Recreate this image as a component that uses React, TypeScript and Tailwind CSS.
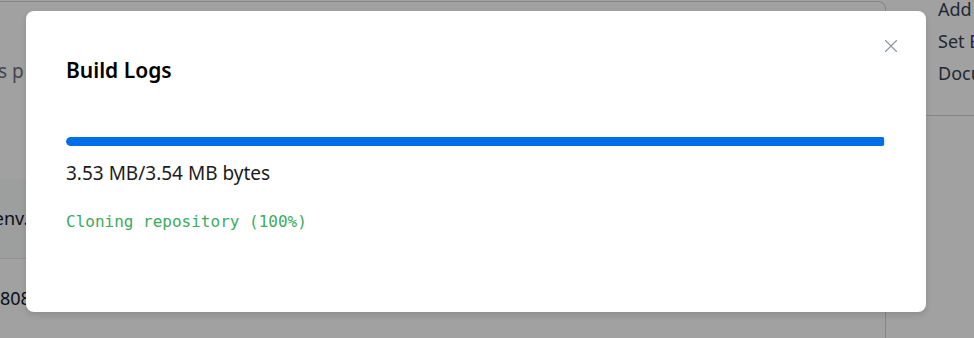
import { X } from "lucide-react";

const sans = "font-['Noto_Sans','Open_Sans',sans-serif]";

function BackgroundPage() {
    return (
        <div className={`absolute inset-0 bg-white ${sans}`}>
            <div className="flex h-full">
                <div className="flex-1 pt-[1px]">
                    <div className="h-full border-t border-r border-gray-300 rounded-tr-lg flex flex-col">
                        <div className="h-[56px]" />
                        <p className="text-[19px] leading-[26px] text-gray-500 whitespace-nowrap -ml-[2px]">
                            s p
                        </p>
                        <div className="h-[96px]" />
                        <div className="bg-gray-50 h-[80px] flex items-center text-[18px] text-gray-900 -ml-[11px] border-b border-gray-200 whitespace-nowrap">
                            .env.c
                        </div>
                        <div className="h-[80px] flex items-center text-[18px] text-gray-900 whitespace-nowrap">
                            808
                        </div>
                    </div>
                </div>
                <div className="w-[86px] ml-[2px]">
                    <ul className="pl-[50px] text-[18px] leading-[24px] text-gray-700 space-y-[8px] -mt-[3px]">
                        <li className="whitespace-nowrap">Add</li>
                        <li className="whitespace-nowrap">Set E</li>
                        <li className="whitespace-nowrap">Docu</li>
                    </ul>
                    <div className="mt-[30px] border-t border-gray-300" />
                </div>
            </div>
        </div>
    );
}

export default function App() {
    const done = 3.53;
    const total = 3.54;
    const pct = (done / total) * 100;

    return (
        <div className="relative w-[974px] h-[338px] overflow-hidden">
            <BackgroundPage />
            <div className="absolute inset-0 bg-[rgba(0,0,0,0.37)]" />

            <div
                className={`absolute left-[26px] top-[11px] w-[900px] h-[301px] bg-white rounded-lg shadow-[0_3px_6px_rgba(0,0,0,0.12)] px-[40px] pt-[44px] ${sans}`}
            >
                <button className="absolute right-[24px] top-[24px] text-[#8c95a3]">
                    <X size={22} strokeWidth={1.2} />
                </button>

                <h2 className="text-[21px] font-semibold text-black leading-[30px]">
                    Build Logs
                </h2>

                <div className="mt-[52px] h-[9px] w-full rounded-full bg-[#e3eefc] overflow-hidden">
                    <div
                        className="h-full bg-[#006ee8] rounded-l-full"
                        style={{ width: `${pct}%` }}
                    />
                </div>

                <p className="mt-[14px] text-[19px] text-[#1c1c1c] leading-[26px]">
                    3.53 MB/3.54 MB bytes
                </p>

                <p className="mt-[24px] font-['DejaVu_Sans_Mono',monospace] text-[16px] text-[#3cab5e] leading-[24px]">
                    Cloning repository (100%)
                </p>
            </div>
        </div>
    );
}
